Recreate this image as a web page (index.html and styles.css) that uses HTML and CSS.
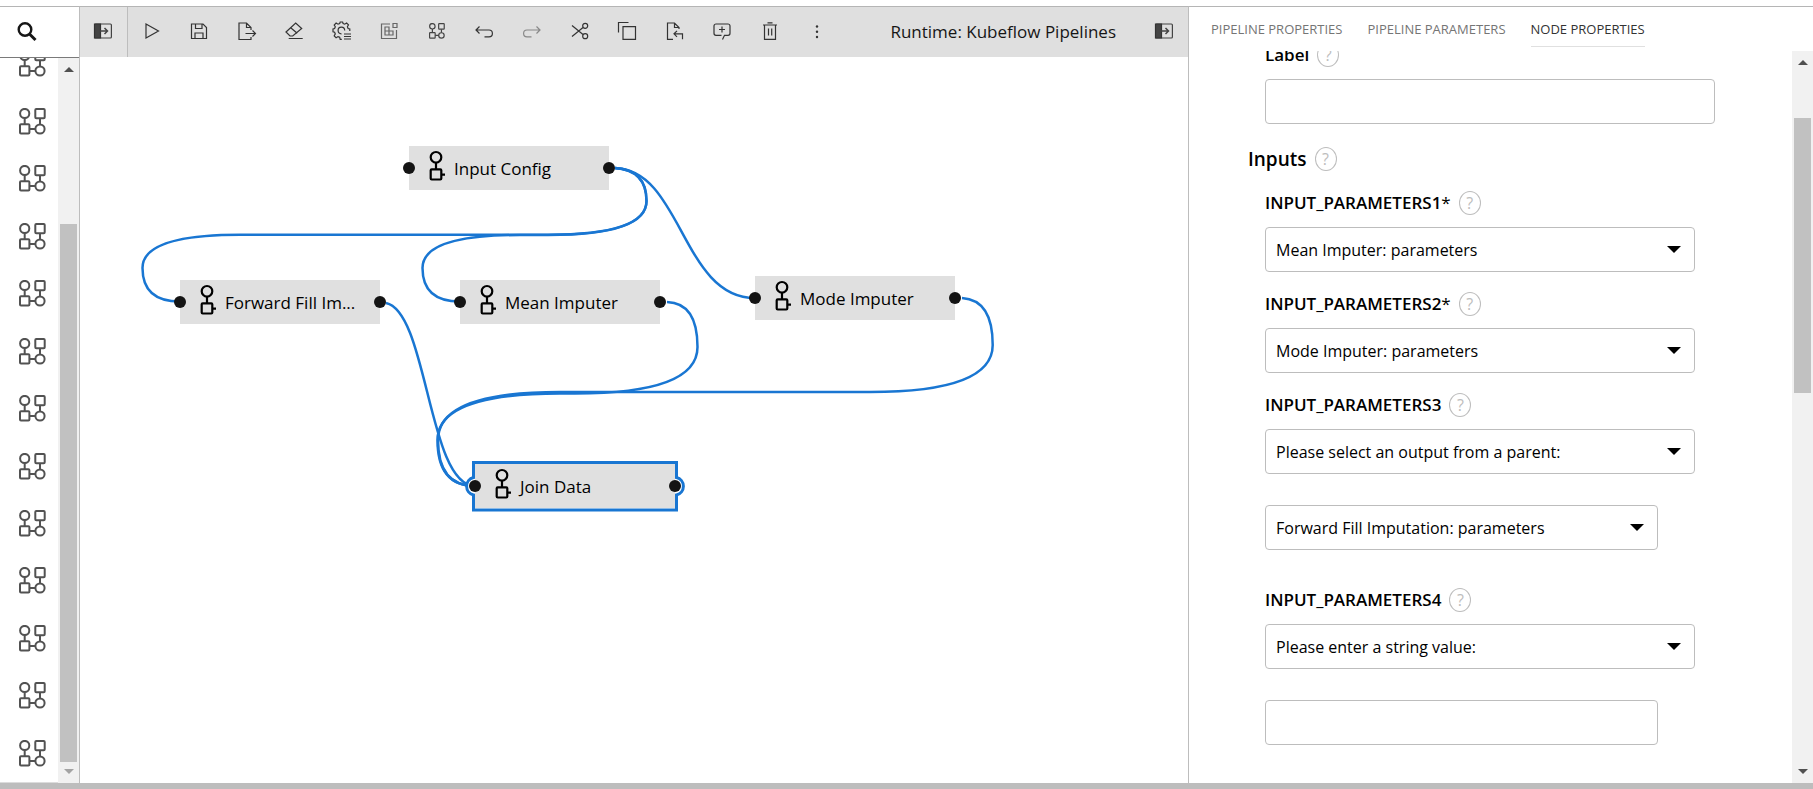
FILE: index.html
```html
<!DOCTYPE html>
<html lang="en">
<head>
<meta charset="utf-8">
<title>Pipeline Editor</title>
<link rel="stylesheet" href="styles.css">
</head>
<body>
<svg class="defs" aria-hidden="true">
  <symbol id="nodes" viewBox="0 0 27 27"><g fill="none" stroke="currentColor" stroke-width="2"><circle cx="5.7" cy="5.5" r="4.6"/><rect x="16.3" y="1" width="9.4" height="9.2" rx="1"/><rect x="1" y="16.3" width="9.4" height="9.2" rx="1"/><circle cx="21" cy="21" r="4.6"/><path d="M5.7 10v6M21 10.500v6M10.500 21h6"/></g></symbol>
  <symbol id="panel" viewBox="0 0 20 20"><rect x="1.600" y="3" width="16.800" height="14" rx="1" fill="none" stroke="currentColor" stroke-width="1.200"/><path d="M1.500 3h6v14h-6z" fill="currentColor"/><path d="M7 10h7.500M11.500 7l3 3-3 3" fill="none" stroke="currentColor" stroke-width="1.500"/></symbol>
  <symbol id="component" viewBox="0 0 16 32"><g fill="none" stroke="currentColor" stroke-width="2.200"><circle cx="7" cy="7.300" r="5.300"/><path d="M7 12.600V19M13 24.700h3"/><rect x="1.700" y="19.300" width="10.600" height="10.200" rx="1"/></g></symbol>
</svg>
<div class="app">
  <aside class="palette">
    <button class="search" aria-label="Search"><svg viewBox="0 0 20 20"><circle cx="8" cy="7.500" r="6.300" fill="none" stroke="currentColor" stroke-width="2.400"/><path d="M12.500 12l6 6" stroke="currentColor" stroke-width="3"/></svg></button>
    <div class="palette-body">
      <div class="palette-clip">
        <ul class="palette-list">
          <li><svg><use href="#nodes"/></svg></li><li><svg><use href="#nodes"/></svg></li><li><svg><use href="#nodes"/></svg></li><li><svg><use href="#nodes"/></svg></li><li><svg><use href="#nodes"/></svg></li><li><svg><use href="#nodes"/></svg></li><li><svg><use href="#nodes"/></svg></li><li><svg><use href="#nodes"/></svg></li><li><svg><use href="#nodes"/></svg></li><li><svg><use href="#nodes"/></svg></li><li><svg><use href="#nodes"/></svg></li><li><svg><use href="#nodes"/></svg></li><li><svg><use href="#nodes"/></svg></li>
        </ul>
      </div>
      <div class="scrollbar palette-scroll"><i class="arrow up"></i><div class="track"><div class="thumb"></div></div><i class="arrow down faded"></i></div>
    </div>
  </aside>

  <main class="editor">
    <div class="toolbar">
      <button class="tool first" aria-label="Toggle palette"><svg><use href="#panel"/></svg></button>
      <div class="tools">
        <button class="tool" aria-label="Run"><svg viewBox="0 0 20 20"><path d="M4 3l12.500 7L4 17z"/></svg></button>
        <button class="tool" aria-label="Save"><svg viewBox="0 0 20 20"><path d="M2.500 3H14l3.500 3.500v11h-15zM6.500 3v4.500H13V3M6 17.500V12h8v5.500"/></svg></button>
        <button class="tool" aria-label="Export"><svg viewBox="0 0 20 20"><path d="M14 16v2.500H2V2h7.500L14 6.500V9M9.500 2v4.500H14M8.500 12.500h10M15.500 9.500l3 3-3 3"/></svg></button>
        <button class="tool" aria-label="Clear"><svg viewBox="0 0 20 20"><path d="M2 11l9.700-9 6 5.500-9 7.500H6zM6.700 6.700l6.500 5.500M4.700 17.500h14"/></svg></button>
        <button class="tool" aria-label="Runtimes"><svg viewBox="0 0 20 20"><path d="M17.800 10V8l-1.700-.5-.7-1.700 1.100-1.900-1.900-1.800-1.900 1.100-1.600-.7-.5-1.500H8.200l-.5 1.500-1.700.7-1.900-1.100-1.900 1.900 1.100 1.800-.7 1.700-1.600.5v2.700l1.600.5.7 1.700-1.100 1.900 1.900 1.900 1.900-1.100 1.700.7.5 2h1.600M9.500 12.800a3.300 3.300 0 1 1 3.200-3.400M12 13h7M12 15.500h7M12 18h7"/></svg></button>
        <button class="tool" aria-label="Component catalogs"><svg class="soft" viewBox="0 0 20 20"><path d="M11 3H2.500v14.500h15V9M14 2.500h4v4h-4zM6 6h4v4h4v4H6zM6 10h4v4"/></svg></button>
        <button class="tool" aria-label="Open files"><svg class="small"><use href="#nodes"/></svg></button>
        <button class="tool" aria-label="Undo"><svg viewBox="0 0 20 20"><path d="M2 9h13a3.400 3.400 0 0 1 0 6.800h-4.500M5.500 5.500L2 9l3.500 3.500"/></svg></button>
        <button class="tool" aria-label="Redo" disabled><svg viewBox="0 0 20 20"><path d="M18 9H5a3.400 3.400 0 0 0 0 6.800h4.500M14.500 5.500L18 9l-3.500 3.500"/></svg></button>
        <button class="tool" aria-label="Cut"><svg viewBox="0 0 20 20"><circle cx="15.200" cy="4.800" r="2.500"/><circle cx="15.200" cy="15.200" r="2.500"/><path d="M2 4.500l11 9M2 15.500l11-9"/></svg></button>
        <button class="tool" aria-label="Copy"><svg viewBox="0 0 20 20"><path d="M6 5.700h12.500v12.600H6zM1.500 11.500v-10h10"/></svg></button>
        <button class="tool" aria-label="Paste"><svg viewBox="0 0 20 20"><path d="M8 18.300H2.500V2h7l4.500 4.500V8M9.500 2v4.500H14M17.500 18.300v-5.500H9M12 9.800l-3 3 3 3"/></svg></button>
        <button class="tool" aria-label="Add comment"><svg viewBox="0 0 20 20"><path d="M10.500 18.500l2-4.200H16a2 2 0 0 0 2-2V5a2 2 0 0 0-2-2H4a2 2 0 0 0-2 2v7.300a2 2 0 0 0 2 2h5.500M10 5.500v6M7 8.500h6"/></svg></button>
        <button class="tool" aria-label="Delete"><svg viewBox="0 0 20 20"><path d="M3 4h14M7.500 1.800h5M4.500 4v14.300h11V4M8.500 7.500v7M11.700 7.500v7"/></svg></button>
        <button class="tool" aria-label="More"><svg viewBox="0 0 20 20"><g fill="#333" stroke="none"><circle cx="10" cy="5.500" r="1.200"/><circle cx="10" cy="10.800" r="1.200"/><circle cx="10" cy="16" r="1.200"/></g></svg></button>
      </div>
      <span class="runtime">Runtime: Kubeflow Pipelines</span>
      <button class="tool last" aria-label="Toggle properties"><svg><use href="#panel"/></svg></button>
    </div>
    <div class="canvas">
      <svg class="links" width="1108" height="726" viewBox="80 57 1108 726">
        <path d="M615 168C682 170 682 298 755 298"/>
        <path d="M615 168Q646.500 170 646.500 201Q646.500 234.700 548 234.700H240Q142.500 234.700 142.500 268Q142.500 301.500 180 301.500"/>
        <path d="M615 168Q646.500 170 646.500 201Q646.500 235 548 235H520Q422.500 235 422.500 268Q422.500 301.500 460 301.500"/>
        <path d="M386 303C428 312 428 486 475 486"/>
        <path d="M667 302Q697.500 303 697.500 347Q697.500 393.500 575 393.500H560Q437.500 393.500 437.500 440Q437.500 486 475 486"/>
        <path d="M962 298Q992.700 300 992.700 345Q992.700 392 870 392H560Q438 392 438 440Q438 486 475 486"/>
        <path class="selection" d="M473.500 462.500h203v15a9 9 0 0 1 0 17.500v15h-203v-15a9 9 0 0 1 0-17.500z"/>
      </svg>
      <div class="node" style="left:329px;top:89px"><svg><use href="#component"/></svg><span>Input Config</span></div>
      <div class="node" style="left:100px;top:223px"><svg><use href="#component"/></svg><span>Forward Fill Im...</span></div>
      <div class="node" style="left:380px;top:223px"><svg><use href="#component"/></svg><span>Mean Imputer</span></div>
      <div class="node" style="left:675px;top:219px"><svg><use href="#component"/></svg><span>Mode Imputer</span></div>
      <div class="node" style="left:395px;top:407px"><svg><use href="#component"/></svg><span>Join Data</span></div>
    </div>
  </main>

  <aside class="properties">
    <nav class="tabs">
      <button>PIPELINE PROPERTIES</button><button>PIPELINE PARAMETERS</button><button class="active">NODE PROPERTIES</button>
    </nav>
    <div class="properties-body">
      <form class="form">
        <div class="field top"><div class="label"><label for="label">Label</label><button type="button" class="help">?</button></div><input id="label" class="wide" type="text"></div>
        <div class="label heading"><h2>Inputs</h2><button type="button" class="help">?</button></div>
        <div class="field first-param"><div class="label"><label for="p1">INPUT_PARAMETERS1<span>*</span></label><button type="button" class="help">?</button></div>
          <div class="select"><select id="p1"><option>Mean Imputer: parameters</option></select></div></div>
        <div class="field"><div class="label"><label for="p2">INPUT_PARAMETERS2<span>*</span></label><button type="button" class="help">?</button></div>
          <div class="select"><select id="p2"><option>Mode Imputer: parameters</option></select></div></div>
        <div class="field"><div class="label"><label for="p3">INPUT_PARAMETERS3</label><button type="button" class="help">?</button></div>
          <div class="select"><select id="p3"><option>Please select an output from a parent:</option></select></div>
          <div class="select nested"><select aria-label="Parent output"><option>Forward Fill Imputation: parameters</option></select></div></div>
        <div class="field spaced"><div class="label"><label for="p4">INPUT_PARAMETERS4</label><button type="button" class="help">?</button></div>
          <div class="select"><select id="p4"><option>Please enter a string value:</option></select></div>
          <input class="nested" type="text" aria-label="String value"></div>
      </form>
      <div class="scrollbar props-scroll"><i class="arrow up"></i><div class="track"><div class="thumb"></div></div><i class="arrow down"></i></div>
    </div>
  </aside>
</div>
</body>
</html>
```
FILE: styles.css
```css
* { box-sizing: border-box; }
body {
  margin: 0;
  background: #fff;
  color: #000;
  font-family: "Open Sans", "Noto Sans", sans-serif;
  font-size: 17px;
}
button { margin: 0; padding: 0; border: 0; background: none; color: inherit; font: inherit; }
.defs { position: absolute; width: 0; height: 0; }
.app {
  display: flex;
  height: 100vh;
  border-top: 6px solid #fff;
  border-bottom: 6px solid #bdbdbd;
  overflow: hidden;
}

/* Palette */
.palette {
  display: flex;
  flex-direction: column;
  flex: 0 0 80px;
  border-top: 1px solid #b5b5b5;
  border-right: 1px solid #bdbdbd;
}
.search {
  flex: 0 0 51px;
  padding: 0 0 1px 17px;
  border-bottom: 1px solid #7a7a7a;
  color: #161616;
  text-align: left;
}
.search svg { display: block; width: 20px; height: 20px; }
.palette-body { display: flex; flex: 1; min-height: 0; }
.palette-clip { flex: 1; overflow: hidden; border-bottom: 1px solid #dcdcdc; }
.palette-list {
  display: flex;
  flex-direction: column;
  height: calc(100% + 23px);
  margin: -23px 0 0;
  padding: 0;
  list-style: none;
}
.palette-list li { display: flex; flex: 1; align-items: center; padding-left: 19px; color: #525252; }
.palette-list svg { width: 27px; height: 27px; }

/* Scrollbars */
.scrollbar { display: flex; flex-direction: column; flex: 0 0 21px; align-items: center; background: #f1f1f1; }
.track { flex: 1; display: flex; flex-direction: column; width: 17px; }
.thumb { background: #c1c1c1; }
.arrow { width: 0; height: 0; margin: 9px 0 7px; border: 5px solid transparent; }
.up { border-top: 0; border-bottom-color: #505050; }
.down { border-bottom: 0; border-top-color: #505050; margin: 7px 0 9px; }
.faded { border-top-color: #a3a3a3; }
.palette-scroll .thumb { flex: 1; margin-top: 145px; }
.props-scroll .thumb { flex: 0 0 275px; margin-top: 46px; }

/* Editor */
.editor { display: flex; flex: 1; flex-direction: column; min-width: 0; border-top: 1px solid #b5b5b5; }
.toolbar { display: flex; flex: 0 0 50px; background: #dfdfdf; }
.tools { display: flex; flex: 0 1 713px; }
.tool { display: flex; flex: 1; align-items: center; justify-content: center; padding-bottom: 2px; color: #444; }
.tool svg { width: 20px; height: 20px; fill: none; stroke: #333; stroke-width: 1.2; }
.tool svg.small { width: 16px; height: 16px; }
.tool svg.soft { stroke: #666; }
.tool:disabled { opacity: 0.5; }
.tool.first { flex: 0 0 48px; padding-right: 1px; border-right: 1px solid #bdbdbd; background: #e3e3e3; }
.tool.last { flex: 0 0 48px; }
.runtime { margin-left: auto; padding-right: 24px; color: #161616; line-height: 50px; white-space: nowrap; }
.canvas { position: relative; flex: 1; overflow: hidden; }
.links { position: absolute; left: 0; top: 0; fill: none; stroke: #1976d2; stroke-width: 2.5; }
.links .selection { fill: #fff; stroke-width: 3; }
.node {
  position: absolute;
  display: flex;
  align-items: center;
  gap: 9px;
  width: 200px;
  height: 44px;
  padding-left: 20px;
  background: #e0e0e0;
}
.node svg { width: 16px; height: 32px; margin-bottom: 4px; }
.node span { white-space: nowrap; }
.node::before, .node::after {
  content: "";
  position: absolute;
  top: 16px;
  width: 12px;
  height: 12px;
  border-radius: 50%;
  background: #141414;
}
.node::before { left: -6px; }
.node::after { right: -6px; }

/* Properties */
.properties {
  display: flex;
  flex-direction: column;
  flex: 0 0 625px;
  border-top: 1px solid #b5b5b5;
  border-left: 1px solid #bdbdbd;
}
.tabs { display: flex; flex: 0 0 44px; gap: 25px; padding-left: 22px; }
.tabs button {
  height: 40px;
  padding-top: 4px;
  border-bottom: 1px solid transparent;
  color: #757575;
  font-size: 13px;
  white-space: nowrap;
}
.tabs .active { border-color: #e0e0e0; color: #333; }
.properties-body { display: flex; flex: 1; min-height: 0; }
.form { flex: 1; overflow: hidden; padding: 0 77px 0 76px; }
.field { display: flex; flex-direction: column; margin-top: 19px; }
.field.top { margin-top: -9px; }
.field.first-param { margin-top: 18px; }
.field.spaced { margin-top: 37px; }
.label { display: flex; align-items: center; gap: 8px; height: 25px; margin-bottom: 12px; font-weight: 600; }
.label span { font-weight: 400; }
.heading { margin: 22px 0 19px -17px; }
.heading h2 { margin: 0; font-size: 19px; font-weight: 600; }
.help {
  width: 22px;
  height: 24px;
  border: 1px solid #bdbdbd;
  border-radius: 50%;
  color: #bdbdbd;
  font-size: 16px;
  font-weight: 400;
  line-height: 22px;
}
input, select {
  width: 100%;
  height: 45px;
  padding: 0 10px;
  border: 1px solid #bdbdbd;
  border-radius: 4px;
  background: #fff;
  color: #000;
  font: inherit;
  font-size: 16px;
}
select { display: block; appearance: none; }
.select { position: relative; margin-right: 20px; }
.select::after {
  content: "";
  position: absolute;
  top: 19px;
  right: 14px;
  border: 7px solid transparent;
  border-top-color: #000;
  border-bottom: 0;
  pointer-events: none;
}
.select.nested { margin: 31px 57px 0 0; }
input.nested { width: auto; margin: 31px 57px 0 0; }
```
